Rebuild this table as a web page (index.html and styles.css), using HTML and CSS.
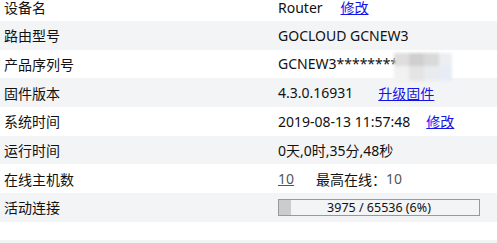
FILE: index.html
```html
<!DOCTYPE html>
<html lang="zh-CN">
<head>
<meta charset="utf-8">
<title>状态</title>
<link rel="stylesheet" href="styles.css">
</head>
<body>
<div class="info">
  <div class="row first">
    <div class="label">设备名</div>
    <div class="value">Router<a class="link gap-router" href="#">修改</a></div>
  </div>
  <div class="row">
    <div class="label">路由型号</div>
    <div class="value">GOCLOUD GCNEW3</div>
  </div>
  <div class="row">
    <div class="label">产品序列号</div>
    <div class="value serial">GCNEW3*********
      <div class="mosaic">
        <span class="m m1"></span><span class="m m2"></span><span class="m m3"></span><span class="m m4"></span>
        <span class="m m5"></span><span class="m m6"></span><span class="m m7"></span><span class="m m8"></span>
      </div>
    </div>
  </div>
  <div class="row">
    <div class="label">固件版本</div>
    <div class="value">4.3.0.16931<a class="link gap-fw" href="#">升级固件</a></div>
  </div>
  <div class="row">
    <div class="label">系统时间</div>
    <div class="value">2019-08-13 11:57:48<a class="link gap-time" href="#">修改</a></div>
  </div>
  <div class="row">
    <div class="label">运行时间</div>
    <div class="value">0天,0时,35分,48秒</div>
  </div>
  <div class="row">
    <div class="label">在线主机数</div>
    <div class="value"><a class="hosts" href="#">10</a><span class="peak">最高在线：</span><span class="peak-num">10</span></div>
  </div>
  <div class="row">
    <div class="label">活动连接</div>
    <div class="value">
      <div class="bar">
        <div class="bar-fill" style="width:6%"></div>
        <div class="bar-text">3975 / 65536 (6%)</div>
      </div>
    </div>
  </div>
  <div class="row spacer"></div>
  <div class="footer"></div>
</div>
</body>
</html>
```
FILE: styles.css
```css
html, body {
  margin: 0;
  padding: 0;
  background: #fff;
  overflow: hidden;
}
body {
  font-family: "Noto Sans", "Noto Sans CJK SC", sans-serif;
  font-size: 14px;
  color: #111;
}
.info {
  display: flex;
  flex-direction: column;
}
.row {
  display: grid;
  grid-template-columns: 278px 1fr;
  height: 28.67px;
  align-items: center;
  background: #fff;
}
.row:nth-child(even) {
  background: #f3f4f6;
}
.row.first {
  height: 21px;
  align-items: start;
  line-height: 16px;
}
.row.spacer {
  height: 18.6px;
}
.footer {
  height: 2.4px;
  background: #f3f4f6;
}
.label {
  padding-left: 4px;
  white-space: nowrap;
}
.value {
  white-space: nowrap;
  display: flex;
  align-items: center;
}
.link {
  color: #1414e6;
  text-decoration: underline;
}
.gap-router { margin-left: 18px; }
.gap-fw { margin-left: 25px; }
.gap-time { margin-left: 16px; }
.serial {
  position: relative;
}
.mosaic {
  position: absolute;
  left: 116px;
  top: -1px;
  width: 58px;
  height: 28px;
  display: grid;
  grid-template-columns: 15px 15px 15px 13px;
  grid-template-rows: 13px 15px;
  filter: blur(1.5px);
}
.m1 { background: #e0dedd; }
.m2 { background: #cfcfcf; }
.m3 { background: #d9d9da; }
.m4 { background: #eceef1; }
.m5 { background: #f1f1f1; }
.m6 { background: #e4e4e4; }
.m7 { background: #e9ebee; }
.m8 { background: #e6edf6; }
.hosts {
  color: #555;
  text-decoration: underline;
}
.peak {
  margin-left: 22px;
  color: #111;
}
.peak-num {
  color: #555;
}
.bar {
  position: relative;
  width: 200px;
  height: 15px;
  border: 1px solid #999;
}
.bar-fill {
  height: 100%;
  background: #ccc;
}
.bar-text {
  position: absolute;
  inset: 0;
  text-align: center;
  font-size: 12.5px;
  line-height: 15px;
  color: #111;
}
```
